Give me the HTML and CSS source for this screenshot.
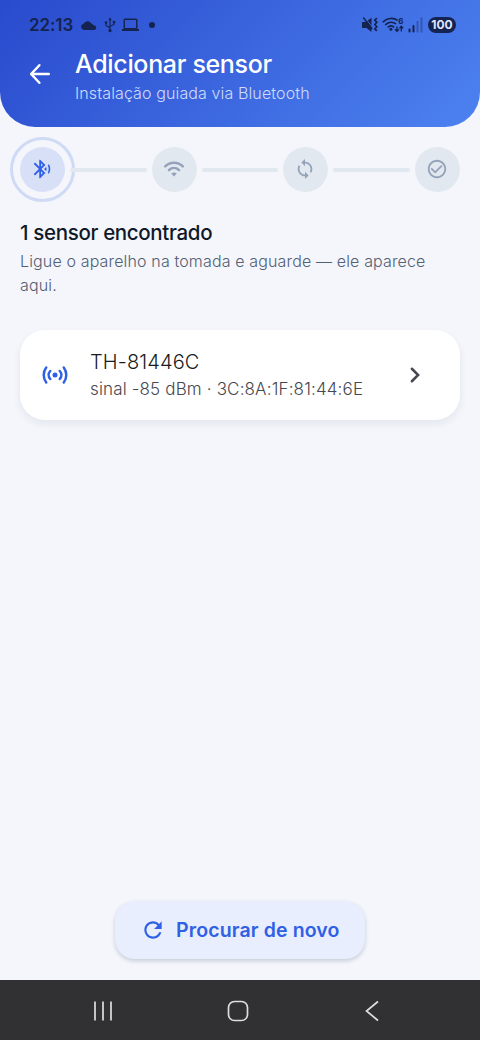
FILE: index.html
```html
<!DOCTYPE html>
<html lang="pt-BR">
<head>
<meta charset="utf-8">
<meta name="viewport" content="width=device-width, initial-scale=1">
<title>Adicionar sensor</title>
<link rel="stylesheet" href="styles.css">
</head>
<body>
<div class="screen">
  <header class="header">
    <div class="status">
      <span class="clock">22:13</span>
      <svg class="cloud" width="17" height="11" viewBox="0 0 17 11"><path d="M4 10a3.200 3.200 0 0 1-.4-6.300C5 .8 9.500.200 11.200 3.400 12.300 3.600 13 4.300 13.300 5.200 17.200 5.400 17 10 14 10z"/></svg>
      <svg class="usb" width="12" height="16" viewBox="0 0 12 16"><path d="M6 2v11M6 11 2 8.500V5.500M6 9.500l4-2V5" fill="none" stroke="currentColor" stroke-width="1.100"/><path d="m6 .300 1.700 3H4.300z"/><circle cx="6" cy="13.600" r="1.600"/><circle cx="2" cy="5.500" r="1.300"/><path d="M8.800 3.800h2.400v2.400H8.800z"/></svg>
      <svg class="laptop" width="17" height="14" viewBox="0 0 17 14"><rect x="2.200" y="1.200" width="12.600" height="9.600" rx=".8" fill="none" stroke="currentColor" stroke-width="1.400"/><path d="M0 11h17v2H0z"/></svg>
      <span class="dot"></span>
      <span class="spacer"></span>
      <svg class="mute" width="16" height="16" viewBox="0 0 16 16"><path d="M0 5h3.500L9.500.700V15L4.500 11H0z"/><path d="M2.600.200 10.500 10.300" stroke="#4470e2" stroke-width="1"/><path d="M1.300.500 10.200 12" stroke="currentColor" stroke-width="1.400"/><path d="m14.800 1.200-2 2 2 2-2 2.300 2 2.200-2 2.200 2 2" fill="none" stroke="currentColor" stroke-width="1.700"/></svg>
      <svg class="wifi6" width="22" height="16" viewBox="0 0 22 16"><g fill="none" stroke="currentColor" stroke-width="1.600"><path d="M.8 5.300C5 .7 11.500.3 15.600 3.400M3.200 8C6.500 4.500 11 4.500 14 7M5.700 10.500c2-2 4.500-2 6.400-.2"/><path d="M15 9.500v5M13 12.300l2 2 2-2M19.300 14.500v-5M17.500 11.300l1.800-2 1.800 2" stroke-width="1.300"/></g><circle cx="8.900" cy="12.300" r="1.500"/><text class="tiny" x="16.300" y="6.600">6</text></svg>
      <svg class="signal" width="15" height="16" viewBox="0 0 15 16"><rect x=".5" y="11.500" width="2" height="4" rx="1"/><rect x="4.500" y="8" width="2" height="7.500" rx="1"/><path opacity=".35" d="M8.500 4h2v11.500h-2zM12.500.500h2v15h-2z"/></svg>
      <span class="battery">100</span>
    </div>
    <div class="bar">
      <svg class="back" width="30" height="30" viewBox="0 0 24 24"><path d="M19 12H5.200M11.500 5 4.900 12l6.600 7" fill="none" stroke="currentColor" stroke-width="2" stroke-linecap="round" stroke-linejoin="round"/></svg>
      <div>
        <h1 class="title">Adicionar sensor</h1>
        <p class="subtitle">Instalação guiada via Bluetooth</p>
      </div>
    </div>
  </header>

  <div class="stepper">
    <div class="step active"><svg width="22" height="22" viewBox="0 0 24 24"><path d="M14.240 12.010l2.320 2.320c.28-.72.44-1.510.44-2.330 0-.82-.16-1.590-.43-2.310l-2.330 2.320zm5.290-5.300l-1.260 1.260c.63 1.210.98 2.570.98 4.020s-.36 2.820-.98 4.020l1.200 1.200c.97-1.540 1.540-3.360 1.540-5.310-.01-1.890-.55-3.670-1.480-5.190zm-3.820 1L10 2H9v7.590L4.410 5 3 6.410 8.590 12 3 17.590 4.410 19 9 14.410V22h1l5.710-5.710-4.300-4.290 4.300-4.290zM11 5.830l1.880 1.880L11 9.590V5.830zm1.880 10.460L11 18.170v-3.760l1.880 1.880z"/></svg></div>
    <div class="line"></div>
    <div class="step"><svg width="22" height="22" viewBox="0 0 24 24"><path d="M2.400 9.100C8 3.800 16 3.800 21.600 9.100M6.500 13.200c3.200-2.900 7.800-2.900 11 0" fill="none" stroke="currentColor" stroke-width="2.700" stroke-linecap="round"/><path d="M9 17c1.800-1.500 4.200-1.500 6 0l-3 3.200z"/></svg></div>
    <div class="line"></div>
    <div class="step"><svg width="22" height="22" viewBox="0 0 24 24"><path d="M12 4V1L8 5l4 4V6c3.310 0 6 2.690 6 6 0 1.010-.25 1.970-.7 2.800l1.460 1.460C19.540 15.030 20 13.570 20 12c0-4.420-3.580-8-8-8zm0 14c-3.310 0-6-2.690-6-6 0-1.010.25-1.970.7-2.800L5.240 7.740C4.460 8.970 4 10.430 4 12c0 4.420 3.580 8 8 8v3l4-4-4-4v3z"/></svg></div>
    <div class="line"></div>
    <div class="step"><svg width="22" height="22" viewBox="0 0 24 24"><path d="M16.590 7.580L10 14.170l-3.590-3.580L5 12l5 5 8-8zM12 2C6.480 2 2 6.480 2 12s4.480 10 10 10 10-4.480 10-10S17.520 2 12 2zm0 18c-4.420 0-8-3.580-8-8s3.580-8 8-8 8 3.580 8 8-3.580 8-8 8z"/></svg></div>
  </div>

  <main class="content">
    <h2 class="found">1 sensor encontrado</h2>
    <p class="hint">Ligue o aparelho na tomada e aguarde — ele aparece aqui.</p>
    <div class="card">
      <svg class="sensor" width="30" height="30" viewBox="0 0 24 24"><g fill="none" stroke="currentColor" stroke-width="2" stroke-linecap="round"><path d="M5 6C2.300 9.500 2.300 14.500 5 18M8.200 8.800c-1.700 1.900-1.700 4.500 0 6.400M19 6c2.700 3.500 2.700 8.500 0 12M15.800 8.800c1.700 1.900 1.700 4.500 0 6.400"/></g><circle cx="12" cy="12" r="2"/></svg>
      <div class="info">
        <div class="name">TH-81446C</div>
        <div class="detail">sinal -85 dBm · 3C:8A:1F:81:44:6E</div>
      </div>
      <svg class="chevron" width="30" height="30" viewBox="0 0 24 24"><path d="m9.500 7 5 5-5 5" fill="none" stroke="currentColor" stroke-width="2" stroke-linecap="round"/></svg>
    </div>
  </main>

  <button class="again">
    <svg width="26" height="26" viewBox="0 0 24 24"><path d="M17.650 6.350C16.200 4.900 14.210 4 12 4c-4.420 0-7.990 3.580-7.990 8s3.570 8 7.990 8c3.730 0 6.840-2.550 7.730-6h-2.080c-.82 2.330-3.040 4-5.650 4-3.310 0-6-2.690-6-6s2.690-6 6-6c1.660 0 3.140.69 4.220 1.780L13 11h7V4l-2.350 2.350z"/></svg>
    <span class="again-text">Procurar de novo</span>
  </button>

  <nav class="nav">
    <svg width="24" height="24" viewBox="0 0 24 24"><path d="M4 2.500v19M12 2.500v19M20 2.500v19"/></svg>
    <svg width="24" height="24" viewBox="0 0 24 24"><rect x="2.500" y="2.500" width="19" height="19" rx="6"/></svg>
    <svg width="24" height="24" viewBox="0 0 24 24"><path d="M18 2.500 6.500 12 18 21.500"/></svg>
  </nav>
</div>
</body>
</html>
```
FILE: styles.css
```css
* { box-sizing: border-box; }
body { margin: 0; font-family: Inter, "Open Sans", sans-serif; }
h1, h2, p { margin: 0; font-weight: 400; white-space: nowrap; }
svg { display: block; fill: currentColor; flex: none; overflow: visible; }
.screen { width: 480px; height: 1040px; display: flex; flex-direction: column; background: #f4f6fb; overflow: hidden; }
.header { height: 127px; flex: none; border-radius: 0 0 35px 35px; background: linear-gradient(135deg, #294acd, #4d82f0); color: #fff; }
.status { height: 50px; padding: 0 24px 0 29px; display: flex; align-items: center; color: #14234f; }
.clock { width: 45px; font-size: 17px; font-weight: 600; letter-spacing: -0.1px; }
.cloud { margin-left: 6px; }
.usb { margin-left: 7px; }
.laptop { margin-left: 6px; }
.dot { width: 6px; height: 6px; margin-left: 10px; border-radius: 50%; background: currentColor; }
.spacer { flex: 1; }
.wifi6 { margin-left: 4px; }
.tiny { font-size: 8px; font-weight: 700; }
.signal { margin-left: 4px; }
.battery { width: 28px; height: 16px; margin-left: 5px; border-radius: 8px; background: #14234f; color: #dfe7ff; font-size: 12px; font-weight: 700; line-height: 16px; text-align: center; }
.bar { display: flex; padding-left: 25px; }
.back { margin: 9px 20px 0 0; }
.title { margin-top: -1px; font-size: 25px; line-height: 30px; font-weight: 500; letter-spacing: -0.33px; }
.subtitle { margin-top: 4px; font-size: 16px; line-height: 20px; font-weight: 300; letter-spacing: 0.12px; color: #d0dbf9; }
.stepper { display: flex; align-items: center; height: 85px; padding: 0 20px; gap: 5px; }
.step { width: 45px; height: 45px; flex: none; display: grid; place-items: center; border-radius: 50%; background: #e2e8ef; color: #94a3b9; }
.step svg { margin: -1px 0 0 -1px; }
.active { background: #d7e0f7; color: #2f60e5; outline: 3px solid #cfdbf5; outline-offset: 7px; }
.line { position: relative; flex: 1; height: 4px; border-radius: 2px; background: #e2e8ef; }
.content { flex: 1; padding: 7px 20px 0; }
.found { font-size: 20.5px; line-height: 28px; font-weight: 500; letter-spacing: -0.34px; color: #101828; }
.hint { margin-top: 2px; padding-right: 10px; font-size: 16px; line-height: 24px; letter-spacing: 0.145px; white-space: normal; color: #526074; font-weight: 300; }
.card { display: flex; align-items: center; height: 90px; margin-top: 33px; padding: 0 30px 0 20px; border-radius: 25px; background: #fff; box-shadow: 0 4px 9px rgba(20, 35, 70, .07); }
.sensor { color: #2f60e5; }
.info { flex: 1; margin-left: 20px; white-space: nowrap; }
.name { font-size: 20px; line-height: 27px; font-weight: 300; letter-spacing: 0.12px; color: #1a1b20; }
.detail { font-size: 17px; line-height: 26px; font-weight: 300; letter-spacing: 0.15px; color: #46474f; }
.chevron { color: #46474f; }
.again { display: flex; align-items: center; align-self: center; width: 250px; height: 58px; margin: 0 0 21px; padding: 0 0 0 25px; gap: 10px; border: 0; border-radius: 20px; background: #e8eefd; color: #2f60e5; font-family: inherit; box-shadow: 0 2px 4px rgba(20, 35, 70, .2); }
.again-text { font-size: 19.5px; font-weight: 600; letter-spacing: 0.13px; white-space: nowrap; }
.nav { height: 60px; flex: none; display: flex; align-items: center; justify-content: space-between; padding: 2px 96px 0 91px; background: #313133; color: #dedede; }
.nav svg { fill: none; stroke: currentColor; stroke-width: 1.7; }
```
